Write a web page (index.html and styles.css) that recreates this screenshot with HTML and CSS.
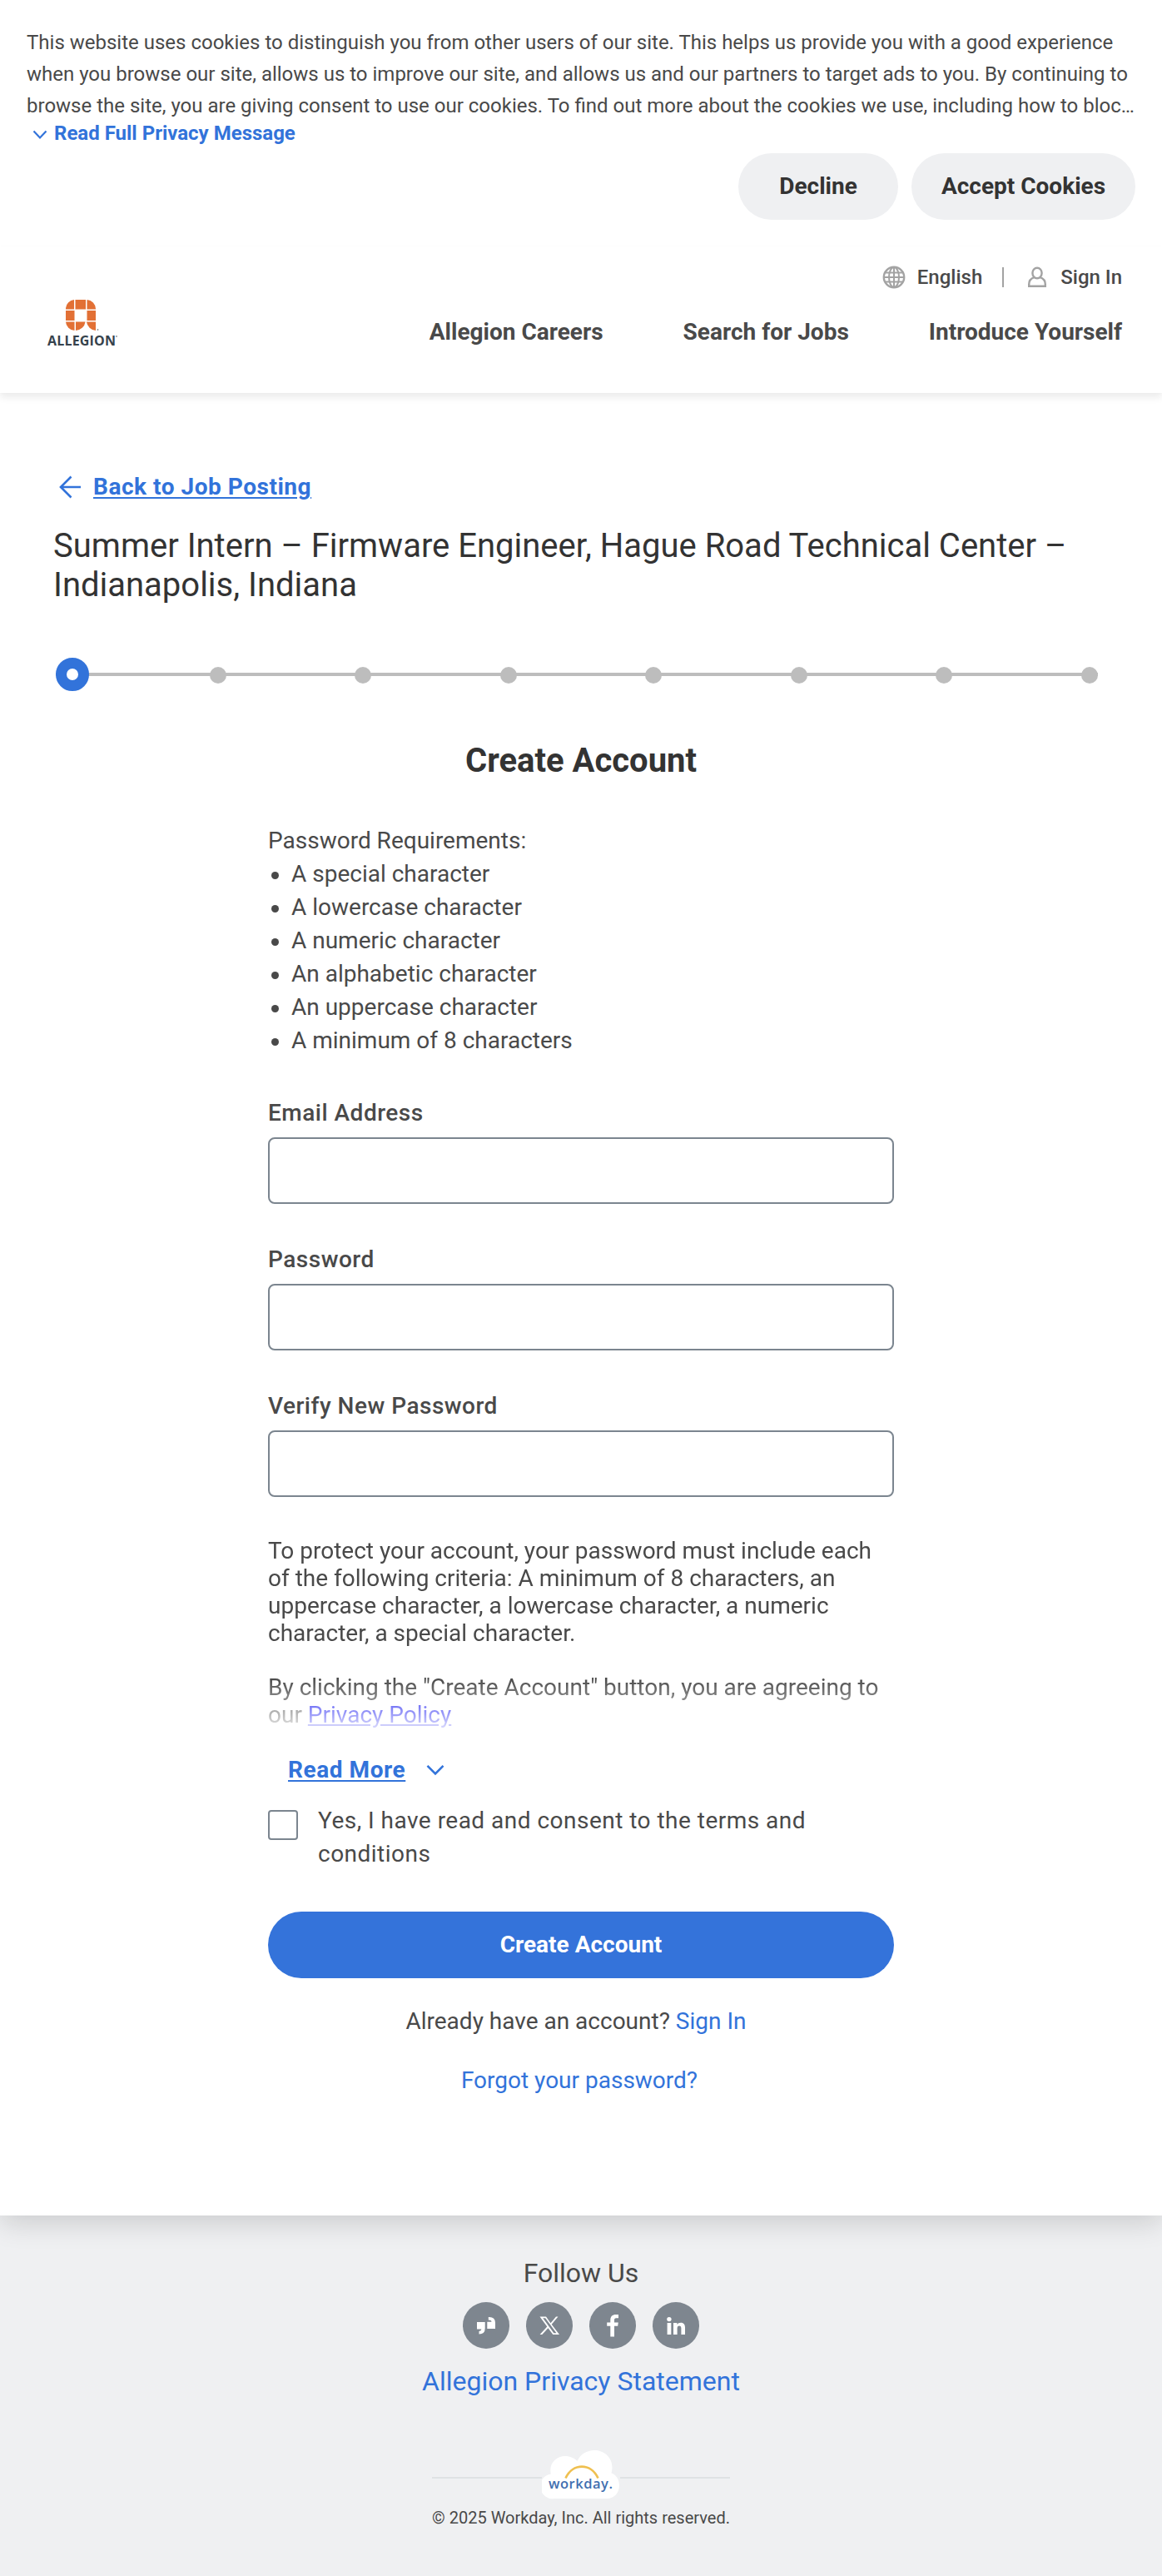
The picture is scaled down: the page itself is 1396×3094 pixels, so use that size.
FILE: index.html
```
<!DOCTYPE html>
<html lang="en">
<head>
<meta charset="utf-8">
<title>Create Account - Allegion Careers</title>
<link rel="stylesheet" href="styles.css">
</head>
<body>
<section class="cookies">
  <p class="cookies-text">This website uses cookies to distinguish you from other users of our site. This helps us provide you with a good experience<br>when you browse our site, allows us to improve our site, and allows us and our partners to target ads to you. By continuing to<br>browse the site, you are giving consent to use our cookies. To find out more about the cookies we use, including how to bloc…</p>
  <a class="cookies-more"><svg width="18" height="12" viewBox="0 0 18 12"><path d="M1.5 1.5 9 9.5l7.500-8" fill="none" stroke="#3273da" stroke-width="2.200"/></svg>Read Full Privacy Message</a>
  <div class="cookies-actions">
    <button class="pill pill-decline">Decline</button>
    <button class="pill pill-accept">Accept Cookies</button>
  </div>
</section>

<header class="header">
  <div class="logo">
    <svg width="100" height="62" viewBox="0 0 100 62">
      <g fill="#e27035">
        <path d="M26 13V11A11 11 0 0 1 36 1V12.500H26z"/><path d="M37.500 1H50V12.500H37.500z"/><path d="M51.500 1A11 11 0 0 1 62 12V12.500H51.500z"/>
        <path d="M26 14H36.500V26H26zM51.500 14H62V26H51.500z"/>
        <path d="M26 27.500H36.500V38A11 11 0 0 1 26 27.500z"/><path d="M38 27.500H49.500A12 12 0 0 1 38 38z"/><path d="M51 27.500H62V38A12 12 0 0 1 51 27.500z"/>
      </g>
      <text x="4" y="56" class="logo-word" textLength="82" lengthAdjust="spacing">ALLEGION</text>
      <circle cx="64.500" cy="37" r=".9" fill="#8a8f94"/><circle cx="87" cy="45" r=".9" fill="#8a8f94"/>
    </svg>
  </div>
  <div class="header-right">
    <div class="utility">
      <svg class="globe" width="28" height="28" viewBox="0 0 28 28" fill="none" stroke="#a3a3a3" stroke-width="2"><circle cx="14" cy="14" r="12.200" stroke-width="2.400"/><ellipse cx="14" cy="14" rx="6" ry="12"/><path d="M14 2v24M2 14h24M4 8.500h20M4 19.500h20"/></svg>
      <span>English</span>
      <i class="divider"></i>
      <svg class="person" width="24" height="26" viewBox="0 0 24 26" fill="none" stroke="#a3a3a3" stroke-width="2.400"><ellipse cx="12" cy="8" rx="5.600" ry="6.300"/><path d="M8.500 13.200C4.500 14.500 2.200 17.500 2.200 21.500V23.800H21.800V21.500C21.800 17.500 19.500 14.500 15.500 13.200"/></svg>
      <span>Sign In</span>
    </div>
    <nav class="nav"><a>Allegion Careers</a><a>Search for Jobs</a><a>Introduce Yourself</a></nav>
  </div>
</header>

<main class="main">
  <a class="back"><svg width="28" height="30" viewBox="0 0 28 30" fill="none" stroke="#3273da" stroke-width="2.600"><path d="M27 15H3M15.500 2.500 3 15l12.500 12.500"/></svg><span>Back to Job Posting</span></a>
  <h1 class="title">Summer Intern – Firmware Engineer, Hague Road Technical Center –<br>Indianapolis, Indiana</h1>
  <ol class="stepper">
    <li class="step current"></li><li class="step"></li><li class="step"></li><li class="step"></li><li class="step"></li><li class="step"></li><li class="step"></li><li class="step"></li>
  </ol>
  <h2 class="subtitle">Create Account</h2>

  <form class="form">
    <div class="requirements">
      <div>Password Requirements:</div>
      <ul>
        <li>A special character</li>
        <li>A lowercase character</li>
        <li>A numeric character</li>
        <li>An alphabetic character</li>
        <li>An uppercase character</li>
        <li>A minimum of 8 characters</li>
      </ul>
    </div>
    <div class="field"><label for="email">Email Address</label><input id="email" type="text"></div>
    <div class="field"><label for="pw">Password</label><input id="pw" type="password"></div>
    <div class="field"><label for="pw2">Verify New Password</label><input id="pw2" type="password"></div>
    <div class="terms">
      <p>To protect your account, your password must include each of the following criteria: A minimum of 8 characters, an uppercase character, a lowercase character, a numeric character, a special character.</p>
      <p>By clicking the "Create Account" button, you are agreeing to our <a class="policy">Privacy Policy</a></p>
    </div>
    <a class="read-more"><span>Read More</span><svg width="22" height="14" viewBox="0 0 22 14"><path d="M1.500 1.800 11 11.300l9.500-9.500" fill="none" stroke="#3273da" stroke-width="2.600"/></svg></a>
    <div class="consent"><input type="checkbox" id="agree"><label for="agree">Yes, I have read and consent to the terms and conditions</label></div>
    <button type="button" class="submit">Create Account</button>
    <div class="signin">Already have an account? <a>Sign In</a></div>
    <a class="forgot">Forgot your password?</a>
  </form>
</main>

<footer class="footer">
  <div class="follow">Follow Us</div>
  <div class="social">
    <a><svg viewBox="0 0 56 56"><path d="M17 24H26.700V31.500Q26.700 38.500 19.500 38.500V35Q22.500 34.500 22.300 32.500H17zM39 32H29.300V23.800H34.500Q34.500 21.500 30.800 21.500V18Q39 17.500 39 25z"/></svg></a>
    <a><svg viewBox="0 0 56 56"><path fill-rule="evenodd" d="M16.500 17.500H24L29.500 25.200 36 17.500H38.500L30.700 26.800 40 39H32.300L26.500 31.200 19.300 39H16.600L25.300 29.500zM20.200 19.300 33.300 37.200H36.500L23.200 19.300z"/></svg></a>
    <a><svg viewBox="0 0 56 56"><path d="M25.300 41.500V28.800H21.200V24.500H25.300V21.500C25.300 17 28 14.900 31.500 14.900H35V19.200H32.300C30.500 19.200 30 20.200 30 21.800V24.500H34.800L34.200 28.800H30V41.500z"/></svg></a>
    <a><svg viewBox="0 0 56 56"><circle cx="19.900" cy="20.600" r="2.700"/><path d="M17.600 25H22.300V39H17.600zM25 25H29.400V27C31.500 23.800 39 23.400 39 30.500V39H34.400V31.500C34.400 27.500 29.600 27.800 29.600 31.500V39H25z"/></svg></a>
  </div>
  <a class="privacy">Allegion Privacy Statement</a>
  <div class="workday">
    <i class="rule"></i>
    <svg width="94" height="60" viewBox="0 0 94 60"><path fill="#fff" d="M15 59A14.500 14.500 0 0 1 10.800 29.500C8 17 17 8 28 8C34 8 39 10.500 42.500 14C46 6 54 1 63 1C76 1 88 12 83.500 28.500C89 30 93 36 93 43C93 52 87 59 78 59z"/><path d="M28.500 34.500C37 16 59 16 67.500 34.500" fill="none" stroke="#efc050" stroke-width="2.600"/><text x="8" y="46.500" class="workday-word" textLength="77" lengthAdjust="spacing">workday.</text></svg>
    <i class="rule"></i>
  </div>
  <div class="copyright">© 2025 Workday, Inc. All rights reserved.</div>
</footer>
</body>
</html>
```
FILE: styles.css
```
* { box-sizing: border-box; }
body { margin: 0; background: #fff; color: #494949; font: 28px/40px Roboto, sans-serif; }
p, h1, h2, ul, ol { margin: 0; padding: 0; list-style: none; }
button, input { font: inherit; margin: 0; border: 0; }
svg { display: block; flex: none; }

.cookies { height: 296px; padding: 32px; }
.cookies-text { font-size: 24px; line-height: 38px; white-space: nowrap; }
.cookies-more { display: flex; align-items: center; height: 28px; padding-left: 7px; gap: 8px; color: #3273da; font-weight: 700; font-size: 24px; line-height: 28px; }
.cookies-more svg { margin-top: 4px; }
.cookies-actions { display: flex; justify-content: flex-end; gap: 16px; margin-top: 10px; }
.pill { height: 80px; border-radius: 40px; background: #eff0f2; color: #333; font-weight: 700; }
.pill-decline { width: 192px; }
.pill-accept { width: 269px; }

.header { display: flex; justify-content: space-between; height: 176px; padding: 16px 48px 0 53px; box-shadow: 0 6px 8px rgba(0, 0, 0, .07), 0 0 2px rgba(0, 0, 0, .03); }
.logo { padding-top: 47px; }
.logo-word { font: 700 16px "Open Sans", sans-serif; fill: #36424c; }
.header-right { display: flex; flex-direction: column; align-items: flex-end; padding-top: 1px; }
.utility { display: flex; align-items: center; height: 40px; font-size: 24px; font-weight: 500; }
.globe { margin-right: 14px; }
.divider { width: 2px; height: 24px; margin: 0 28px 0 24px; background: #a3a3a3; }
.person { margin-right: 16px; }
.nav { display: flex; gap: 96px; margin-top: 26px; font-weight: 700; }

.main { height: 2189px; padding: 93px 64px 0; box-shadow: 0 8px 32px rgba(0, 0, 0, .16); clip-path: inset(0 0 -60px); position: relative; }
.back { display: flex; align-items: center; gap: 14px; padding-left: 6px; color: #3273da; font-weight: 700; letter-spacing: .53px; text-decoration: underline; }
.back, .read-more { text-underline-offset: 3px; text-decoration-thickness: 2px; }
.title { margin-top: 27px; font-weight: 400; font-size: 40px; line-height: 47px; color: #333; white-space: nowrap; }
.stepper { display: flex; align-items: center; justify-content: space-between; height: 40px; margin: 64px 13px 0 3px; background: linear-gradient(#bdbdbd, #bdbdbd) 0 18px / 100% 4px no-repeat; }
.step { width: 20px; height: 20px; margin-top: 2px; border-radius: 50%; background: #bdbdbd; }
.step.current { width: 40px; height: 40px; margin: 0 -10px 0 0; background: #fff; border: 13px solid #3273da; }
.subtitle { margin-top: 60px; font-size: 40px; line-height: 48px; color: #333; text-align: center; }

.form { display: flex; flex-direction: column; width: 752px; margin: 52px auto 0; }
.requirements li { display: flex; align-items: center; gap: 15px; padding-left: 4px; }
.requirements li::before { content: ""; width: 9px; height: 9px; margin-top: 2px; border-radius: 50%; background: #494949; }
.field { display: flex; flex-direction: column; gap: 9px; margin-top: 47px; }
.field label { font-weight: 500; letter-spacing: .5px; }
.field input { height: 80px; border: 2px solid #7b858f; border-radius: 8px; background: #fff; }
.terms { height: 240px; margin-top: 48px; line-height: 33px; -webkit-mask-image: linear-gradient(#000 170px, transparent 240px); mask-image: linear-gradient(#000 170px, transparent 240px); }
.terms p + p { margin-top: 32px; }
.policy { color: #00e; text-decoration: underline; }
.read-more { display: flex; align-items: center; gap: 25px; margin-top: 20px; padding-left: 24px; color: #3273da; font-weight: 700; letter-spacing: .56px; text-decoration: underline; }
.consent { display: flex; gap: 24px; margin-top: 21px; letter-spacing: .48px; }
.consent input { appearance: none; flex: none; width: 36px; height: 36px; margin-top: 7px; border: 2px solid #7b858f; border-radius: 4px; }
.consent label { width: 600px; }
.submit { height: 80px; margin-top: 49px; border-radius: 40px; background: #3473da; color: #fff; font-weight: 700; }
.signin { margin-top: 32px; padding-right: 12px; text-align: center; }
.signin a, .forgot { color: #3273da; }
.forgot { margin-top: 31px; padding-right: 4px; text-align: center; }

.footer { display: flex; flex-direction: column; align-items: center; height: 433px; padding-top: 49px; background: #eff0f2; }
.follow, .privacy { font-size: 32px; line-height: 40px; }
.social { display: flex; gap: 20px; margin-top: 15px; }
.social a { width: 56px; height: 56px; border-radius: 50%; background: #7e868f; }
.social svg { fill: #fff; }
.privacy { margin-top: 19px; color: #3273da; }
.workday { display: flex; align-items: center; margin-top: 62px; }
.rule { width: 132px; height: 2px; margin-top: 8px; background: #dfe2e4; }
.workday-word { font: 600 16.5px "Open Sans", sans-serif; fill: #3f6fb0; }
.copyright { margin-top: 8px; font-size: 20px; line-height: 28px; }
```
